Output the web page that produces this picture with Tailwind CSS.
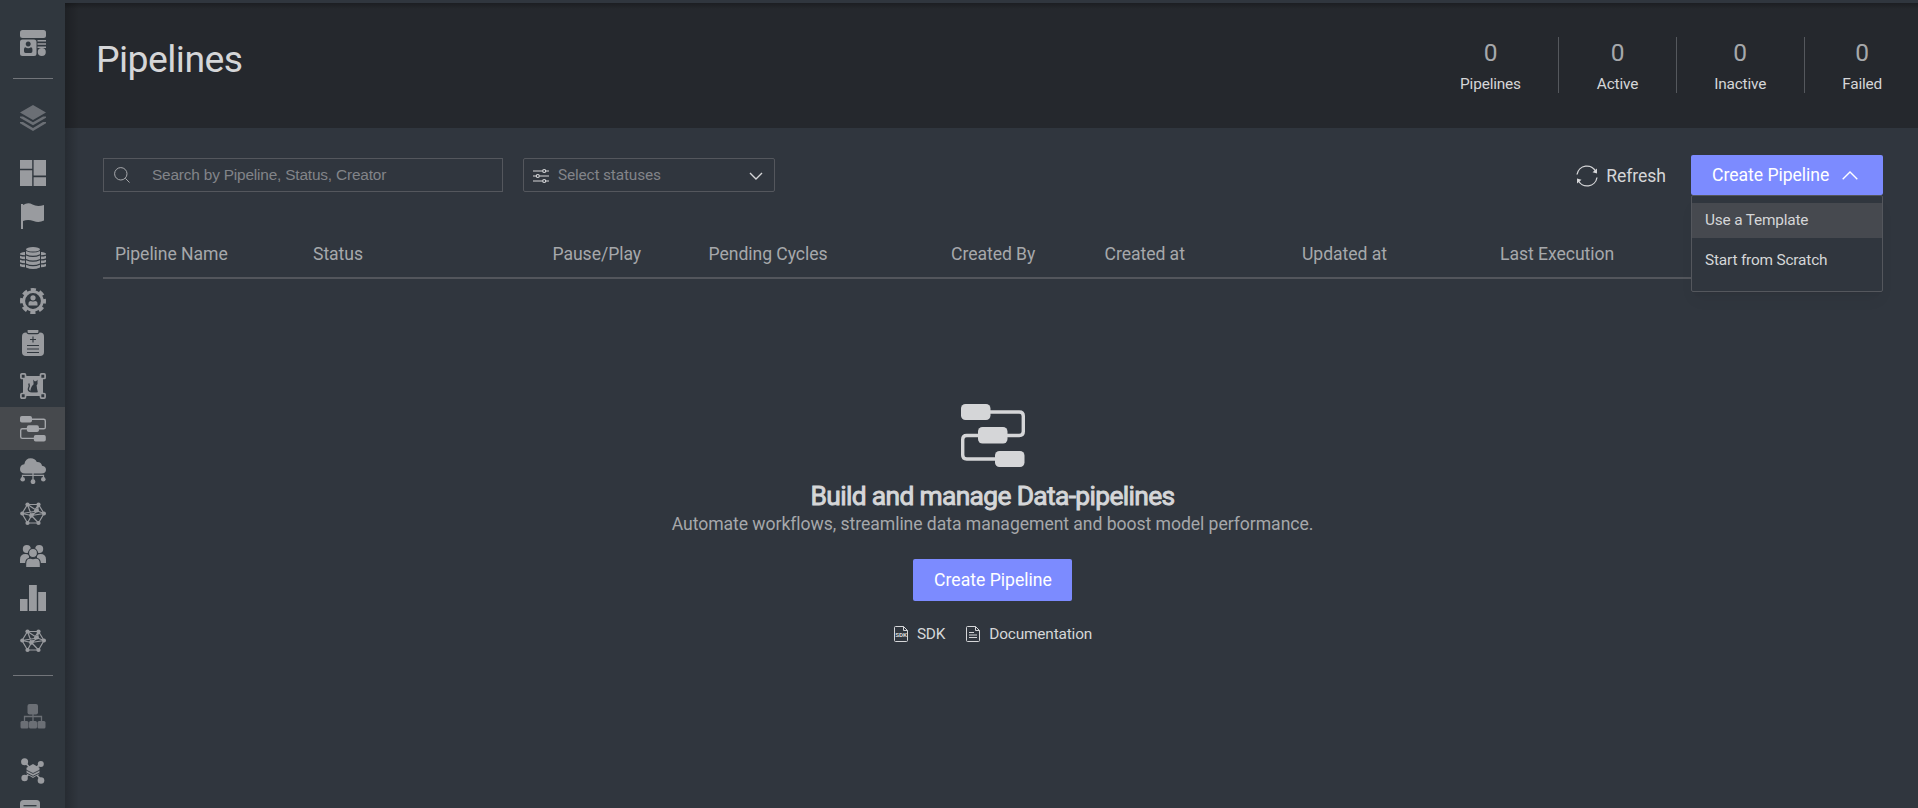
<!DOCTYPE html>
<html lang="en">
<head>
<meta charset="utf-8">
<title>Pipelines</title>
<script src="https://cdn.jsdelivr.net/npm/@tailwindcss/browser@4"></script>
</head>
<body class="h-[808px] overflow-hidden bg-[#30363e] font-['Roboto',sans-serif] text-[#d5d6d8]">
<svg class="hidden">
  <symbol id="pipe" viewBox="0 0 64 64"><path d="M22 8h36.300q4 0 4 4v15.500q0 4-4 4H5.700q-4 0-4 4V51q0 4 4 4h36" fill="none" stroke="currentColor" stroke-width="3.400"/><g fill="currentColor"><rect x="0" y="0" width="29.500" height="16" rx="4.500"/><rect x="17" y="23" width="29.500" height="16.500" rx="4.500"/><rect x="34" y="47" width="29.500" height="16" rx="4.500"/></g></symbol>
  <symbol id="net" viewBox="0 .5 26 26"><path d="M7.500 4h11l5.500 9-5.500 9.500h-11L2 13zM7.500 4l4 11 6-4.500L18.500 4M7.500 4l10 6.500L24 13l-12.500 2L2 13l15.500-2.500M11.500 15l-4 7.500M11.500 15l7 7.500M18.500 4l-7 11" fill="none" stroke="currentColor" stroke-width="1.200"/><g fill="currentColor"><circle cx="7.500" cy="4" r="2.100"/><circle cx="18.500" cy="4" r="2.100"/><circle cx="24" cy="13" r="2"/><circle cx="2.200" cy="13" r="2"/><circle cx="7.500" cy="22.500" r="2.100"/><circle cx="18.500" cy="22.500" r="2.100"/><circle cx="11.300" cy="15" r="2.200"/><circle cx="17" cy="10" r="1.900"/></g></symbol>
</svg>
<div class="flex h-full">
  <nav class="flex w-[65px] shrink-0 flex-col items-center bg-[#30373e] text-[#999b9f]">
    <svg class="mt-[30px] size-[26px] shrink-0" viewBox="0 0 26 26" fill="currentColor"><rect width="26" height="8" rx="2.500"/><path fill-rule="evenodd" d="M2.500 9.500h11.500q2.500 0 2.500 2.500v11.500q0 2.500-2.500 2.500H2.500Q0 26 0 23.500V12q0-2.500 2.500-2.500zM8.200 11.500a2.500 2.500 0 1 0 .01 0M5.500 17.200q-1.500 0-1.500 2v2q0 1.800 1.500 1.800h5.400q1.500 0 1.500-1.800v-2q0-2-1.500-2-1.200 1-2.700 1t-2.700-1"/><path d="M17.500 10h8.500v1.600h-8.500zM17.500 13.200h8.500v1.600h-8.500zM17.500 16.400h8.500v1.600h-8.500z"/><circle cx="21.800" cy="22" r="4"/></svg>
    <div class="mt-[22px] h-px w-10 shrink-0 bg-[#72757a]"></div>
    <svg class="mt-[26px] size-[26px] shrink-0 text-[#6b6f75]" viewBox="0 0 26 26" fill="currentColor"><path d="M13 0l13 7.500L13 15 0 7.500zM0 11.500h3l10 5.800 10-5.800h3v1.200L13 20.200 0 12.700zM0 17h3l10 6 10-6h3v1.300L13 26 0 18.300z"/></svg>
    <div class="mt-[21px] flex flex-col items-center">
      <div class="flex h-[42.550px] w-[65px] items-center justify-center"><svg class="size-[26px]" viewBox="0 0 26 26" fill="currentColor"><path d="M0 0h12.200v8.700H0zM0 10.300h12.200V26H0zM13.600 0H26v15.500H13.600zM13.600 17.200H26V26H13.600z"/></svg></div>
      <div class="flex h-[42.550px] w-[65px] items-center justify-center"><svg class="size-[26px]" viewBox="0 0 26 26" fill="currentColor"><path d="M1 1h2v1Q8-1 12.500 1.500T24 2v15.500q-5 2.500-10.500.5T3 18v8H1z"/></svg></div>
      <div class="flex h-[42.550px] w-[65px] items-center justify-center"><svg class="size-[26px]" viewBox="0 0 26 26" fill="currentColor"><ellipse cx="13" cy="4.300" rx="7" ry="2.300"/><path d="M6 6q7 3 14 0v3.300q-7 3-14 0zM6 10.600q7 3 14 0v3.300q-7 3-14 0zM6 15.200q7 3 14 0v3.300q-7 3-14 0zM6 19.800q7 3 14 0v2.700q-7 3-14 0zM0 8.500q2-1.800 5-1.500v3.200Q2 10.200 0 9.500zM0 10.700q2 .9 5 .9v2.600q-3 0-5-.9zM0 14.700q2 .9 5 .9v2.600q-3 0-5-.9zM0 18.700q2 .9 5 .9v2.600q-3 0-5-.9zM26 8.500Q24 6.700 21 7v3.200q3 0 5-.7zM26 10.700q-2 .9-5 .9v2.600q3 0 5-.9zM26 14.700q-2 .9-5 .9v2.600q3 0 5-.9zM26 18.700q-2 .9-5 .9v2.600q3 0 5-.9z"/></svg></div>
      <div class="flex h-[42.550px] w-[65px] items-center justify-center"><svg class="size-[26px]" viewBox="0 0 26 26" fill="currentColor"><circle cx="13" cy="13" r="9.300" fill="none" stroke="currentColor" stroke-width="2.800"/><circle cx="13" cy="13" r="11.500" fill="none" stroke="currentColor" stroke-width="3" stroke-dasharray="5.200 3.832" stroke-dashoffset="2.600"/><circle cx="13" cy="9.800" r="2.600"/><path d="M8.500 17.500v-1.800q0-2.700 2.500-2.700 2 1 4 0 2.500 0 2.500 2.700v1.800z"/></svg></div>
      <div class="flex h-[42.550px] w-[65px] items-center justify-center"><svg class="size-[26px]" viewBox="0 0 26 26"><rect x="2" y="2.500" width="22" height="23.500" rx="4" fill="currentColor"/><rect x="7" y="-1" width="12" height="4.600" rx="1.500" fill="currentColor" stroke="#30373e" stroke-width="1.200"/><path d="M13 6.500v6M10 9.500h6M7 15.500h12M7 19h12M7 22.500h12" stroke="#30373e" stroke-width="1.100"/></svg></div>
      <div class="flex h-[42.550px] w-[65px] items-center justify-center"><svg class="size-[26px]" viewBox="0 0 26 26"><path fill="currentColor" d="M3 3h20v20H3z"/><g fill="#30373e" stroke="currentColor" stroke-width="1.700"><rect x=".9" y=".9" width="4.600" height="4.600" rx="1"/><rect x="20.500" y=".9" width="4.600" height="4.600" rx="1"/><rect x=".9" y="20.500" width="4.600" height="4.600" rx="1"/><rect x="20.500" y="20.500" width="4.600" height="4.600" rx="1"/></g><path fill="#30373e" d="M13.200 6.500l1.300 1.700h1.600l1.400-1.500v4.300l-1 1.800.6 3.200.8 3.200h-6.700q1.500-5 2.400-8z"/><path fill="#30373e" d="M13.400 11.500q-3.200 3-3 7.700h6.500l-.5-6z"/><path d="M10.800 18.600q-3-.6-2.300-3.200 1.500-2 .3-4.900" fill="none" stroke="#30373e" stroke-width="1.400"/></svg></div>
      <div class="flex h-[42.550px] w-[65px] items-center justify-center bg-[#46494d]"><svg class="size-[26px] text-[#a4a6aa]"><use href="#pipe"/></svg></div>
      <div class="flex h-[42.550px] w-[65px] items-center justify-center"><svg class="size-[26px]" viewBox="0 0 26 26" fill="currentColor"><path d="M5 15.500q-5-.3-5-4.600 0-4 4.300-4.700Q5.500.3 10.800.3q4.200 0 6 3.700 4.700-.2 5.200 3.800 4 .5 4 4 0 3.700-4.500 3.700z"/><path d="M2.500 21v-3.700h21V21M13 15v8M2 17.300h22" fill="none" stroke="currentColor" stroke-width="1.300"/><circle cx="2.700" cy="21.200" r="2.300"/><circle cx="13" cy="23.700" r="2.400"/><circle cx="23.300" cy="21.200" r="2.300"/></svg></div>
      <div class="flex h-[42.550px] w-[65px] items-center justify-center"><svg class="size-[26px]"><use href="#net"/></svg></div>
      <div class="flex h-[42.550px] w-[65px] items-center justify-center"><svg class="size-[26px]" viewBox="0 0 26 26" fill="currentColor"><circle cx="6.800" cy="6" r="4"/><circle cx="19.200" cy="6" r="4"/><path d="M0 20v-3.500Q0 11 5.500 11q2 0 3.500 1.200v3.600L5.500 20zM26 20v-3.500Q26 11 20.500 11q-2 0-3.500 1.200v3.600l3.500 4.200z"/><g stroke="#30373e" stroke-width="1.200"><circle cx="13" cy="10" r="4.500"/><path d="M5.600 24.600V21q0-6 5-6 2.400 1.200 4.800 0 5 0 5 6v3.600z"/></g></svg></div>
      <div class="flex h-[42.550px] w-[65px] items-center justify-center pb-px"><svg class="size-[26px]" viewBox="0 0 26 26" fill="currentColor"><path d="M0 14h7.500v12H0zM9 0h7.800v26H9zM18.200 7H26v19h-7.800z"/></svg></div>
      <div class="flex h-[42.550px] w-[65px] items-center justify-center"><svg class="size-[26px]"><use href="#net"/></svg></div>
    </div>
    <div class="mt-[12px] h-px w-10 shrink-0 bg-[#72757a]"></div>
    <svg class="mt-[28px] size-[26px] shrink-0 text-[#6b6f75]" viewBox="0 0 26 26" fill="currentColor"><rect x="7.500" width="10.500" height="10.500" rx="2"/><path d="M13 10v8M4.500 17v-4.500h17V17" fill="none" stroke="currentColor" stroke-width="1.300"/><rect x=".5" y="17" width="8" height="7.500" rx="1.500"/><rect x="9" y="17" width="8" height="7.500" rx="1.500"/><rect x="17.500" y="17" width="8" height="7.500" rx="1.500"/></svg>
    <svg class="mt-[28px] size-[26px] shrink-0" viewBox="0 0 26 26" fill="currentColor"><path d="M4.500 4l17 18M20.500 6l-16 14" stroke="currentColor" stroke-width="1.700"/><circle cx="4.600" cy="3.800" r="3.500"/><circle cx="20.800" cy="6" r="3"/><circle cx="4.600" cy="20" r="3.200"/><circle cx="21" cy="22.500" r="3.300"/><path d="M13 6l6.500 3.700V16L13 20l-6.500-4V9.700z"/><path d="M6 12l7 3.500 7-3.500M6 14.800l7 3.500 7-3.500" fill="none" stroke="#30373e" stroke-width=".9"/></svg>
    <svg class="mt-[16px] h-[26px] w-[26px] shrink-0" viewBox="0 0 26 26"><rect width="20" height="26" rx="3.500" fill="currentColor"/><path d="M3.500 5.700h13" stroke="#30373e" stroke-width="1.300"/></svg>
  </nav>

  <div class="flex min-w-0 flex-1 flex-col pt-[3px]">
    <main class="relative flex flex-1 flex-col">
      <div class="pointer-events-none absolute inset-y-0 left-0 w-[14px] bg-linear-to-r from-black/20 to-transparent"></div>
      <div class="pointer-events-none absolute inset-x-0 top-0 h-[6px] bg-linear-to-b from-black/25 to-transparent"></div>
      <header class="flex h-[125px] justify-between bg-[#25282d] pr-[36px] pl-[31px]">
        <h1 class="mt-[35px] text-[37.400px] leading-[42px] tracking-[-0.550px]">Pipelines</h1>
        <div class="mt-[34px] flex h-14 text-center text-[15.400px] tracking-[-0.180px]">
          <div class="px-[37.500px]"><div class="h-[35px] pt-[2px] text-[24.500px] leading-7 text-[#a6a8ab]">0</div><div class="leading-[24px]">Pipelines</div></div>
          <div class="border-l border-[#55585d] px-[37.500px]"><div class="h-[35px] pt-[2px] text-[24.500px] leading-7 text-[#a6a8ab]">0</div><div class="leading-[24px]">Active</div></div>
          <div class="border-l border-[#55585d] px-[37.500px]"><div class="h-[35px] pt-[2px] text-[24.500px] leading-7 text-[#a6a8ab]">0</div><div class="leading-[24px]">Inactive</div></div>
          <div class="border-l border-[#55585d] pl-[37.500px]"><div class="h-[35px] pt-[2px] text-[24.500px] leading-7 text-[#a6a8ab]">0</div><div class="leading-[24px]">Failed</div></div>
        </div>
      </header>

      <section class="flex flex-1 flex-col pt-[27px] pr-[35px] pl-[38px]">
        <div class="flex h-10 items-start">
          <div class="mt-[3px] flex h-[34px] w-[400px] items-center border border-[#54575d] pl-[10px]">
            <svg class="size-4 text-[#a6a8ab]" viewBox="0 0 16 16" fill="none" stroke="currentColor"><circle cx="6.800" cy="6.800" r="6.200"/><path d="M11.300 11.300l4.200 4.200"/></svg>
            <span class="ml-[22px] font-['Liberation_Sans',sans-serif] text-[15.400px] leading-5 tracking-[-0.180px] text-[#828489]">Search by Pipeline, Status, Creator</span>
          </div>
          <div class="mt-[3px] ml-5 flex h-[34px] w-[252px] items-center rounded-xs border border-[#54575d] pr-[11px] pl-[9px]">
            <svg class="mt-[2px] size-4 text-[#d5d6d8]" viewBox="0 0 16 16" fill="none" stroke="currentColor" stroke-width="1.200"><path d="M0 3h9.500M13 3h3M0 8h3M6.500 8H16M0 13h9.500M13 13h3"/><circle cx="11.200" cy="3" r="1.500"/><circle cx="4.800" cy="8" r="1.500"/><circle cx="11.200" cy="13" r="1.500"/></svg>
            <span class="ml-[9px] flex-1 text-[15.400px] leading-5 tracking-[-0.150px] text-[#828489]">Select statuses</span>
            <svg class="mt-px h-2 w-[14px]" viewBox="0 0 14 8" fill="none" stroke="currentColor" stroke-width="1.400"><path d="M1 1l6 6 6-6"/></svg>
          </div>
          <div class="mt-[9px] ml-auto flex items-center text-[17.600px] leading-6 tracking-[-0.050px]">
            <svg class="mr-[8px] size-[22px]" viewBox="0 0 22 22" fill="none" stroke="currentColor" stroke-width="1.300"><path d="M1 9.500A10 10 0 0 1 20 7M21 12.500A10 10 0 0 1 2 15"/><path d="M21 3.500v5l-4.500-1.200zM1 18.500v-5l4.500 1.200z" fill="currentColor" stroke="none"/></svg>
            Refresh
          </div>
          <div class="relative ml-[25px] h-10 w-48">
            <button class="flex h-10 w-48 items-center rounded-xs bg-[#7c8bff] pl-[21px] text-[17.600px] tracking-[-0.030px] text-white">Create Pipeline
              <svg class="ml-[13px] h-[9px] w-4" viewBox="0 0 16 9" fill="none" stroke="currentColor" stroke-width="1.400"><path d="M.7 8.300L8 1l7.300 7.300"/></svg>
            </button>
            <div class="absolute top-10 left-0 flex h-[97px] w-48 flex-col rounded-xs border border-[#54575d] bg-[#30363e] pt-[7px] text-[15.400px] tracking-[-0.180px] shadow-lg shadow-black/5">
              <div class="flex h-[35px] items-center bg-[#46494f] pl-[13px]">Use a Template</div>
              <div class="mt-[5px] flex h-[35px] items-center pl-[13px]">Start from Scratch</div>
            </div>
          </div>
        </div>

        <div class="mt-[43px] grid h-[41px] grid-cols-[198px_239.500px_156px_242.500px_153.500px_197.500px_198px_1fr] border-b-2 border-[#53565c] pt-[4px] pl-3 text-[17.600px] leading-6 tracking-[-0.050px] text-[#a6a8ab]">
          <div>Pipeline Name</div><div>Status</div><div>Pause/Play</div><div>Pending Cycles</div><div>Created By</div><div>Created at</div><div>Updated at</div><div>Last Execution</div>
        </div>

        <div class="flex flex-col items-center pt-[125px] pr-px">
          <svg class="size-16"><use href="#pipe"/></svg>
          <h2 class="mt-[12px] text-[26.400px] leading-8 tracking-[-0.660px] [-webkit-text-stroke:0.900px_#d5d6d8]">Build and manage Data-pipelines</h2>
          <p class="text-[17.600px] leading-6 tracking-[-0.050px] text-[#a6a8ab]">Automate workflows, streamline data management and boost model performance.</p>
          <button class="mt-[23px] h-[42px] w-[159px] rounded-xs bg-[#7c8bff] pl-px text-[17.600px] text-white">Create Pipeline</button>
          <div class="mt-[21px] flex items-center pl-px text-[15.400px] leading-6 tracking-[-0.170px]">
            <svg class="mr-[9px] h-4 w-[14px]" viewBox="0 0 14 16" fill="none" stroke="currentColor"><path d="M.5 5.500v-4q0-1 1-1h8l4 4v1M.5 11v3.500q0 1 1 1h11q1 0 1-1V11M9.500.5v4h4M.5 5v7M13.500 5v7"/><text x="7" y="10.800" font-size="6" font-weight="700" text-anchor="middle" fill="currentColor" stroke="none" textLength="11.500" lengthAdjust="spacingAndGlyphs">SDK</text></svg>
            SDK
            <svg class="mr-[9px] ml-[21px] h-4 w-[14px]" viewBox="0 0 14 16" fill="none" stroke="currentColor"><path d="M1.500.5h8l4 4v10q0 1-1 1h-11q-1 0-1-1v-13q0-1 1-1M9.500.5v4h4M3 6.500h5M3 9h8M3 11.500h8"/></svg>
            Documentation
          </div>
        </div>
      </section>
    </main>
  </div>
</div>
</body>
</html>
